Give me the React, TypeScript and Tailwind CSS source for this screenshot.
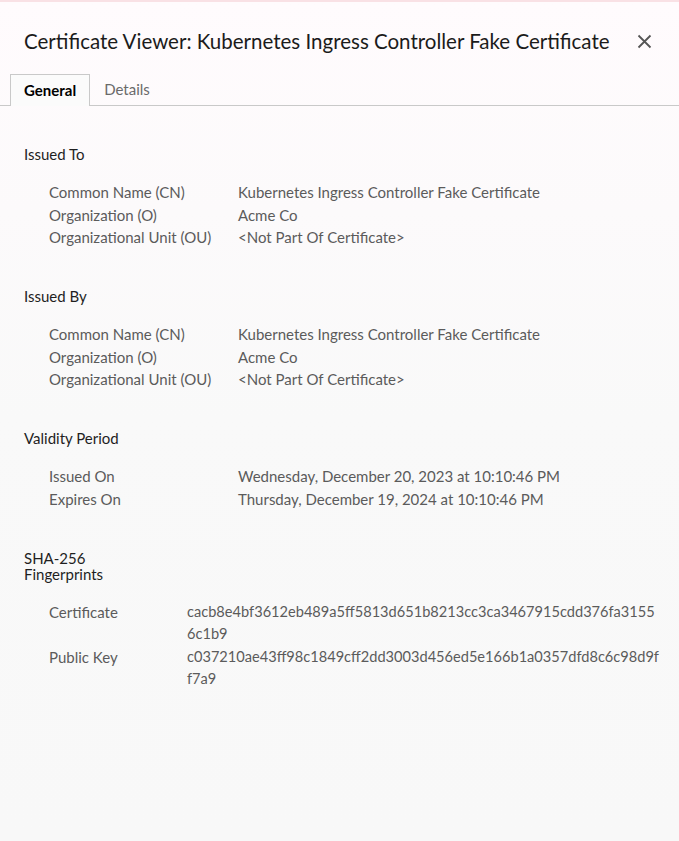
import React from "react";

type Row = { label: string; value: string; wrapAt?: number };

const FONT = "font-['Lato','Noto_Sans',sans-serif]";

function Section({
  title,
  rows,
  labelWidth = "w-[189px]",
  valueClass = "text-[15px]",
}: {
  title: React.ReactNode;
  rows: Row[];
  labelWidth?: string;
  valueClass?: string;
}) {
  return (
    <div className="mb-[39.5px]">
      <div className="text-[15px] leading-[16px] text-[#1f1f1f]">{title}</div>
      <div className="mt-[19px] pl-[25px]">
        {rows.map((row) => (
          <div key={row.label} className="flex text-[15px] leading-[22.5px] text-[#5b5b5b]">
            <div className={`${labelWidth} shrink-0`}>{row.label}</div>
            <div className={valueClass}>
              {row.wrapAt ? (
                <>
                  {row.value.slice(0, row.wrapAt)}
                  <wbr />
                  {row.value.slice(row.wrapAt)}
                </>
              ) : (
                row.value
              )}
            </div>
          </div>
        ))}
      </div>
    </div>
  );
}

export default function App() {
  return (
    <div
      className={`${FONT} min-h-[841px] w-full border-t-2 border-[#f9e1e5] bg-gradient-to-b from-[#fffbfd] via-[#f9f9f9] to-[#f8f8f8]`}
    >
      <div className="flex items-center justify-between pl-[24px] pr-[27px] pt-[27px]">
        <h1 className="text-[20.5px] leading-[24px] text-[#1b1b1b]">
          Certificate Viewer: Kubernetes Ingress Controller Fake Certificate
        </h1>
        <button type="button" className="text-[#555]" aria-label="Close">
          <svg width="15" height="15" viewBox="0 0 15 15">
            <path d="M1.5 1.5 L13.5 13.5 M13.5 1.5 L1.5 13.5" stroke="currentColor" strokeWidth="1.8" />
          </svg>
        </button>
      </div>

      <div className="mt-[21px] flex border-b border-[#c9c9c9] pl-[10px]">
        <div className="-mb-px border border-b-0 border-[#c9c9c9] bg-[#fbfbfb] px-[13px] pb-[7px] pt-[6px] text-[15px] font-bold leading-[18px] text-black">
          General
        </div>
        <div className="px-[14px] pb-[7px] pt-[6px] text-[15px] leading-[18px] text-[#6a6a6a]">Details</div>
      </div>

      <div className="px-[24px] pt-[40px]">
        <Section
          title="Issued To"
          rows={[
            { label: "Common Name (CN)", value: "Kubernetes Ingress Controller Fake Certificate" },
            { label: "Organization (O)", value: "Acme Co" },
            { label: "Organizational Unit (OU)", value: "<Not Part Of Certificate>" },
          ]}
        />
        <Section
          title="Issued By"
          rows={[
            { label: "Common Name (CN)", value: "Kubernetes Ingress Controller Fake Certificate" },
            { label: "Organization (O)", value: "Acme Co" },
            { label: "Organizational Unit (OU)", value: "<Not Part Of Certificate>" },
          ]}
        />
        <Section
          title="Validity Period"
          rows={[
            { label: "Issued On", value: "Wednesday, December 20, 2023 at 10:10:46 PM" },
            { label: "Expires On", value: "Thursday, December 19, 2024 at 10:10:46 PM" },
          ]}
        />
        <Section
          title={
            <>
              SHA-256
              <br />
              Fingerprints
            </>
          }
          labelWidth="w-[138px]"
          valueClass="w-[480px] text-[14.6px]"
          rows={[
            {
              label: "Certificate",
              value: "cacb8e4bf3612eb489a5ff5813d651b8213cc3ca3467915cdd376fa31556c1b9",
              wrapAt: 59,
            },
            {
              label: "Public Key",
              value: "c037210ae43ff98c1849cff2dd3003d456ed5e166b1a0357dfd8c6c98d9ff7a9",
              wrapAt: 60,
            },
          ]}
        />
      </div>
    </div>
  );
}
